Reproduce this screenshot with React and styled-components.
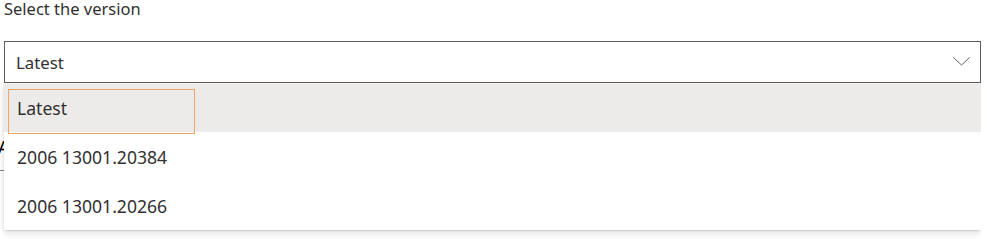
import styled, { createGlobalStyle } from "styled-components";

const GlobalStyle = createGlobalStyle`
  body {
    margin: 0;
    background: #ffffff;
    font-family: "Noto Sans", "Open Sans", sans-serif;
    color: #323130;
  }
`;

const Page = styled.div`
  width: 977px;
  padding-left: 4px;
  height: 239px;
  overflow: hidden;
`;

const Label = styled.div`
  font-size: 16.5px;
  line-height: 18px;
  height: 18px;
  margin-bottom: 23px;
  color: #323130;
`;

const Field = styled.div`
  position: relative;
`;

const SelectBox = styled.div`
  box-sizing: border-box;
  height: 42px;
  border: 1px solid #605e5c;
  display: flex;
  align-items: center;
  justify-content: space-between;
  padding: 0 10px 0 11px;
  font-size: 16.8px;
  color: #323130;
`;

const Chevron = styled.svg`
  width: 17px;
  height: 9px;
  margin-top: -1px;
`;

const Behind = styled.div`
  margin-left: -4px;
  width: 987px;
  padding-top: 53px;
`;

const Heading = styled.div`
  font-size: 18px;
  line-height: 22px;
  color: #000;
  margin-left: -2px;
`;

const Rule = styled.div`
  margin-top: 12px;
  height: 1px;
  background: #8a8886;
`;

const Callout = styled.div`
  position: absolute;
  top: 43px;
  left: 0;
  width: 977px;
  background: #ffffff;
  box-shadow: 0 3px 7px rgba(0, 0, 0, 0.13), 0 0.6px 2px rgba(0, 0, 0, 0.11);
  border-radius: 0 0 2px 2px;
`;

const Option = styled.div`
  position: relative;
  box-sizing: border-box;
  height: ${(p) => p.h}px;
  display: flex;
  align-items: center;
  padding-left: 13px;
  font-size: 17.6px;
  color: #323130;
  background: ${(p) => (p.selected ? "#edebe9" : "#ffffff")};
`;

const FocusRing = styled.div`
  position: absolute;
  z-index: 1;
  left: 4px;
  top: 5px;
  width: 187px;
  height: 45px;
  box-sizing: border-box;
  border: 1px solid #f0a468;
  pointer-events: none;
`;

const options = [
  { label: "Latest", h: 48, selected: true },
  { label: "2006 13001.20384", h: 50 },
  { label: "2006 13001.20266", h: 48 },
];

export default function App() {
  return (
    <>
      <GlobalStyle />
      <Page>
        <Label>Select the version</Label>
        <Field>
          <SelectBox>
            <span>Latest</span>
            <Chevron viewBox="0 0 17 9" fill="none">
              <path d="M0.5 0.5 L8.5 8 L16.5 0.5" stroke="#605e5c" strokeWidth="1" />
            </Chevron>
          </SelectBox>
          <Behind>
            <Heading>A</Heading>
            <Rule />
          </Behind>
          <Callout>
            {options.map((o) => (
              <Option key={o.label} h={o.h} selected={o.selected}>
                {o.selected && <FocusRing />}
                {o.label}
              </Option>
            ))}
          </Callout>
        </Field>
      </Page>
    </>
  );
}
